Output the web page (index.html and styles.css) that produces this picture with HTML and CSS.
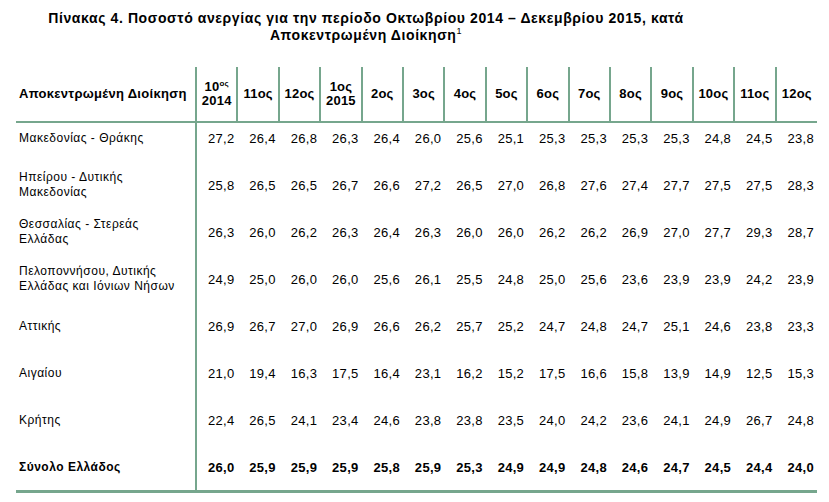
FILE: index.html
```html
<!DOCTYPE html>
<html lang="el">
<head>
<meta charset="utf-8">
<title>Πίνακας 4</title>
<link rel="stylesheet" href="styles.css">
</head>
<body>
<div class="page">
  <h1 class="title">Πίνακας 4. Ποσοστό ανεργίας για την περίοδο Οκτωβρίου 2014 – Δεκεμβρίου 2015, κατά<br>Αποκεντρωμένη Διοίκηση<sup>1</sup></h1>
  <table class="data">
    <colgroup>
      <col class="c-name">
      <col span="15" class="c-num">
    </colgroup>
    <thead>
      <tr>
        <th class="h-name">Αποκεντρωμένη Διοίκηση</th>
        <th>10<sup class="os">ος</sup><br>2014</th>
        <th>11ος</th>
        <th>12ος</th>
        <th>1ος<br>2015</th>
        <th>2ος</th>
        <th>3ος</th>
        <th>4ος</th>
        <th>5ος</th>
        <th>6ος</th>
        <th>7ος</th>
        <th>8ος</th>
        <th>9ος</th>
        <th>10ος</th>
        <th>11ος</th>
        <th>12ος</th>
      </tr>
    </thead>
    <tbody>
      <tr><td class="name">Μακεδονίας - Θράκης</td><td>27,2</td><td>26,4</td><td>26,8</td><td>26,3</td><td>26,4</td><td>26,0</td><td>25,6</td><td>25,1</td><td>25,3</td><td>25,3</td><td>25,3</td><td>25,3</td><td>24,8</td><td>24,5</td><td>23,8</td></tr>
      <tr><td class="name">Ηπείρου - Δυτικής<br>Μακεδονίας</td><td>25,8</td><td>26,5</td><td>26,5</td><td>26,7</td><td>26,6</td><td>27,2</td><td>26,5</td><td>27,0</td><td>26,8</td><td>27,6</td><td>27,4</td><td>27,7</td><td>27,5</td><td>27,5</td><td>28,3</td></tr>
      <tr><td class="name">Θεσσαλίας - Στερεάς<br>Ελλάδας</td><td>26,3</td><td>26,0</td><td>26,2</td><td>26,3</td><td>26,4</td><td>26,3</td><td>26,0</td><td>26,0</td><td>26,2</td><td>26,2</td><td>26,9</td><td>27,0</td><td>27,7</td><td>29,3</td><td>28,7</td></tr>
      <tr><td class="name">Πελοποννήσου, Δυτικής<br>Ελλάδας και Ιόνιων Νήσων</td><td>24,9</td><td>25,0</td><td>26,0</td><td>26,0</td><td>25,6</td><td>26,1</td><td>25,5</td><td>24,8</td><td>25,0</td><td>25,6</td><td>23,6</td><td>23,9</td><td>23,9</td><td>24,2</td><td>23,9</td></tr>
      <tr><td class="name">Αττικής</td><td>26,9</td><td>26,7</td><td>27,0</td><td>26,9</td><td>26,6</td><td>26,2</td><td>25,7</td><td>25,2</td><td>24,7</td><td>24,8</td><td>24,7</td><td>25,1</td><td>24,6</td><td>23,8</td><td>23,3</td></tr>
      <tr><td class="name">Αιγαίου</td><td>21,0</td><td>19,4</td><td>16,3</td><td>17,5</td><td>16,4</td><td>23,1</td><td>16,2</td><td>15,2</td><td>17,5</td><td>16,6</td><td>15,8</td><td>13,9</td><td>14,9</td><td>12,5</td><td>15,3</td></tr>
      <tr><td class="name">Κρήτης</td><td>22,4</td><td>26,5</td><td>24,1</td><td>23,4</td><td>24,6</td><td>23,8</td><td>23,8</td><td>23,5</td><td>24,0</td><td>24,2</td><td>23,6</td><td>24,1</td><td>24,9</td><td>26,7</td><td>24,8</td></tr>
      <tr class="total"><td class="name">Σύνολο Ελλάδος</td><td>26,0</td><td>25,9</td><td>25,9</td><td>25,9</td><td>25,8</td><td>25,9</td><td>25,3</td><td>24,9</td><td>24,9</td><td>24,8</td><td>24,6</td><td>24,7</td><td>24,5</td><td>24,4</td><td>24,0</td></tr>
    </tbody>
  </table>
</div>
</body>
</html>
```
FILE: styles.css
```css
html, body {
  margin: 0;
  padding: 0;
  background: #ffffff;
}

body {
  font-family: "Liberation Sans", Arial, sans-serif;
  color: #000000;
}

.page {
  padding: 10px 0 0 16px;
}

.title {
  width: 700px;
  margin: 0;
  font-size: 14px;
  line-height: 17px;
  font-weight: bold;
  text-align: center;
  letter-spacing: 0.6px;
}

.title sup {
  font-size: 9px;
  line-height: 0;
  font-weight: normal;
}

.data {
  margin-top: 23px;
  width: 801px;
  table-layout: fixed;
  border-collapse: collapse;
  font-size: 13px;
}

.c-name {
  width: 180px;
}

.c-num {
  width: 41.4px;
}

.data th {
  height: 54px;
  padding: 0 1px;
  font-size: 13px;
  line-height: 14px;
  font-weight: bold;
  text-align: center;
  vertical-align: middle;
  border-left: 2px solid #76a68d;
  border-bottom: 2px solid #76a68d;
  letter-spacing: 0.2px;
}

.data th.h-name {
  border-left: none;
  text-align: left;
  padding-left: 3px;
  letter-spacing: 0.3px;
}

.data th sup.os {
  font-size: 8px;
  line-height: 0;
  vertical-align: 5px;
}

.data td {
  height: 30px;
  padding: 0 3px 17px 2px;
  line-height: 15px;
  text-align: right;
  vertical-align: middle;
  letter-spacing: 0.3px;
}

.data td.name {
  text-align: left;
  padding-left: 3px;
  font-size: 12px;
  letter-spacing: 0.5px;
  border-right: 2px solid #76a68d;
}

.data tr.total td {
  font-weight: bold;
  padding-bottom: 8px;
  border-bottom: 3px solid #76a68d;
}
```
